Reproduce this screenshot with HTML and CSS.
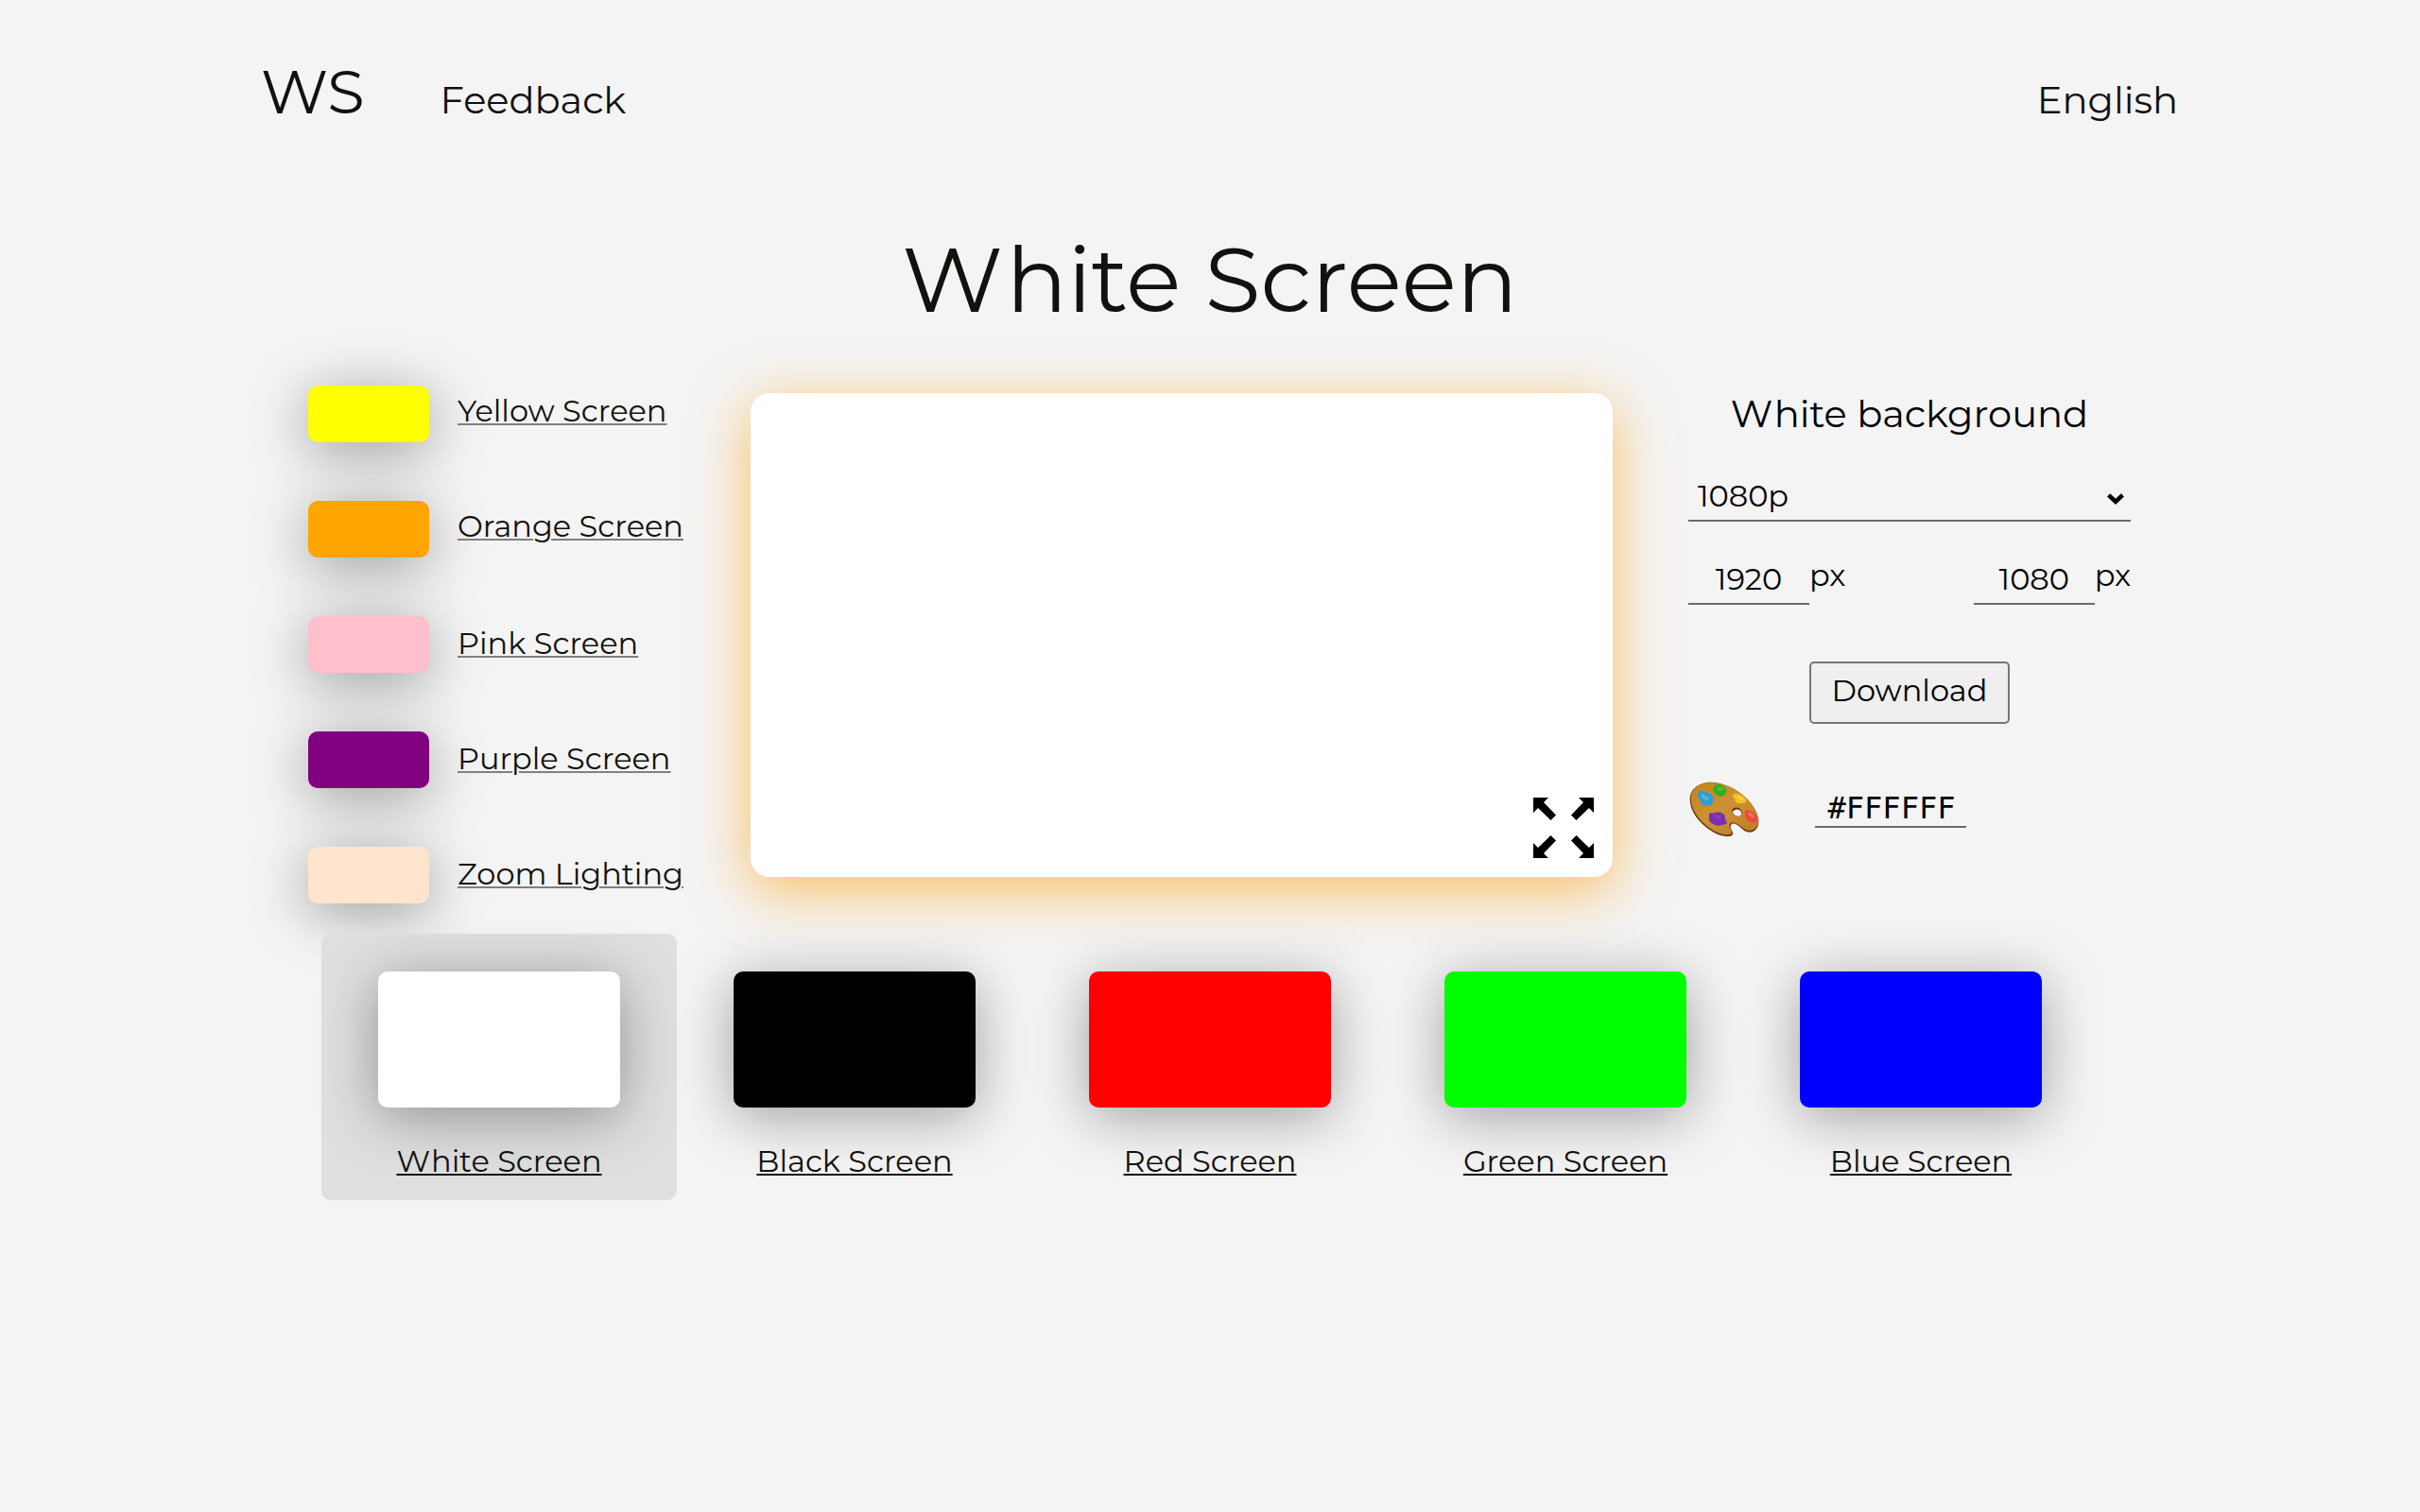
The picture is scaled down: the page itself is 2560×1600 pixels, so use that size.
FILE: index.html
```html
<!DOCTYPE html>
<html lang="en">
<head>
    <meta charset="UTF-8">
    <meta name="viewport" content="width=device-width, initial-scale=1.0">
    <title>White Screen</title>
    <link rel="stylesheet" href="styles.css">
</head>
<body>

    <header class="header">
        <a class="logo" href="#">WS</a>
        <a class="nav-link" href="#">Feedback</a>
        <a class="nav-link lang" href="#">English</a>
    </header>

    <h1 class="title">White Screen</h1>

    <div class="content">
        <ul class="side-list">
            <li><a href="#"><span class="swatch yellow"></span><span class="label">Yellow Screen</span></a></li>
            <li><a href="#"><span class="swatch orange"></span><span class="label">Orange Screen</span></a></li>
            <li><a href="#"><span class="swatch pink"></span><span class="label">Pink Screen</span></a></li>
            <li><a href="#"><span class="swatch purple"></span><span class="label">Purple Screen</span></a></li>
            <li><a href="#"><span class="swatch zoom"></span><span class="label">Zoom Lighting</span></a></li>
        </ul>

        <div class="preview" id="preview">
            <svg class="expand" viewBox="0 0 64 64" onclick="openFull()">
                <path d="M0 0H16L11 5L24 18.5L18.5 24L5 11L0 16Z"/>
                <path d="M64 0V16L59 11L45.5 24L40 18.5L53 5L48 0Z"/>
                <path d="M0 64V48L5 53L18.5 40L24 45.5L11 59L16 64Z"/>
                <path d="M64 64H48L53 59L40 45.5L45.5 40L59 53L64 48Z"/>
            </svg>
        </div>

        <div class="settings">
            <h2>White background</h2>
            <div class="select">
                <span>1080p</span>
                <svg class="chevron" viewBox="0 0 18 12"><path d="M1.6 1.8L9 8.8L16.4 1.8"/></svg>
            </div>
            <div class="sizes">
                <div class="size"><input type="text" value="1920"><span>px</span></div>
                <div class="size"><input type="text" value="1080"><span>px</span></div>
            </div>
            <button class="download">Download</button>
            <div class="picker">
                <svg class="palette" viewBox="0 0 222 180">
                    <defs>
                        <linearGradient id="wood" x1="0" y1="0" x2="1" y2="1">
                            <stop offset="0" stop-color="#c0851f"/>
                            <stop offset="0.5" stop-color="#cd9233"/>
                            <stop offset="1" stop-color="#bb7d27"/>
                        </linearGradient>
                    </defs>
                    <path fill="#6e3c12" d="M2 56C2 22 32 2 70 2C118 4 170 34 196 70C212 92 221 112 220 130C219 150 206 162 190 161C172 160 166 146 152 138C140 130 130 134 131 145C132 154 140 160 138 168C134 176 116 176 100 171C60 158 2 110 2 56Z"/>
                    <path fill="url(#wood)" d="M5 50C7 20 34 3 70 3C118 4 170 34 196 70C212 92 220 110 219 126C218 144 206 156 191 155C174 154 166 142 152 134C138 126 127 130 127 141C128 152 137 156 134 163C130 171 114 170 99 165C60 152 4 104 5 50Z"/>
                    <path fill="#5f330f" d="M136 92C138 80 156 80 164 90C170 98 168 108 160 110C148 112 134 104 136 92Z"/>
                    <path fill="#f4f4f4" d="M138 96C142 86 156 86 163 94C168 101 166 109 158 110C148 111 137 104 138 96Z"/>
                    <path fill="#2b9ed2" d="M28 36C32 26 42 28 48 34C58 32 70 36 74 46C72 54 80 60 74 68C68 78 54 78 44 74C36 72 38 62 32 56C26 50 26 42 28 36Z"/>
                    <path fill="#54b4e0" d="M36 38C44 38 48 46 56 48C64 52 64 58 58 60C48 58 38 50 36 38Z"/>
                    <path fill="#2fae22" d="M76 22C78 12 88 8 95 9C104 12 116 18 118 28C119 38 110 48 98 47C86 46 76 36 76 22Z"/>
                    <path fill="#4cc436" d="M88 20C96 14 108 20 110 28C104 26 96 32 90 28Z"/>
                    <path fill="#f2bf24" d="M139 42C144 38 150 40 156 39C166 42 180 52 181 62C178 70 162 72 152 68C142 64 148 56 142 52C138 48 137 45 139 42Z"/>
                    <path fill="#fbd848" d="M152 46C162 46 172 54 172 60C164 58 154 56 152 46Z"/>
                    <path fill="#7b2fae" d="M62 104C66 96 74 102 82 98C92 94 104 98 112 106C114 114 112 122 120 130C118 138 106 136 98 140C86 142 74 134 66 128C58 122 66 112 62 104Z"/>
                    <path fill="#8a3fbc" d="M76 106C88 102 100 108 102 118C94 122 82 116 76 106Z"/>
                    <path fill="#ee4a3c" d="M177 92C182 86 190 92 198 96C208 100 218 110 217 124C212 132 198 132 188 126C180 118 174 102 177 92Z"/>
                    <path fill="#ff7565" d="M186 98C196 98 206 106 206 114C196 114 188 108 186 98Z"/>
                </svg>
                <input class="hex" id="hex" type="text" value="#FFFFFF">
            </div>
        </div>
    </div>

    <ul class="cards">
        <li class="active"><a href="#"><span class="card white"></span><span class="label">White Screen</span></a></li>
        <li><a href="#"><span class="card black"></span><span class="label">Black Screen</span></a></li>
        <li><a href="#"><span class="card red"></span><span class="label">Red Screen</span></a></li>
        <li><a href="#"><span class="card green"></span><span class="label">Green Screen</span></a></li>
        <li><a href="#"><span class="card blue"></span><span class="label">Blue Screen</span></a></li>
    </ul>

    <script>
        const preview = document.getElementById('preview');
        const hex = document.getElementById('hex');

        function openFull() {
            preview.requestFullscreen();
        }

        hex.addEventListener('input', function () {
            preview.style.backgroundColor = hex.value;
        });
    </script>
</body>
</html>
```
FILE: styles.css
```css
* {
    box-sizing: border-box;
}
body {
    margin: 0;
    padding: 58px 256px 0 276px;
    min-height: 100vh;
    background-color: #f4f4f4;
    color: #000;
    font-family: Montserrat, Inter, sans-serif;
    font-size: 32px;
    line-height: 39px;
}
a {
    color: #11110d;
    text-decoration: none;
}
ul {
    list-style: none;
    margin: 0;
    padding: 0;
}

.header {
    display: flex;
    align-items: baseline;
}
.logo {
    font-size: 64px;
    line-height: 78px;
}
.nav-link {
    font-size: 40px;
    line-height: 49px;
    margin-left: 80px;
}
.nav-link.lang {
    margin-left: auto;
}
.title {
    margin: 101px 0 54px -20px;
    color: #11110d;
    font-size: 96px;
    font-weight: 400;
    line-height: 117px;
    text-align: center;
}
/* loosen the tight W-h pair */
.title::first-letter,
.settings h2::first-letter,
.active .label::first-letter {
    letter-spacing: 0.035em;
}

/* three columns */
.content {
    display: flex;
    align-items: flex-start;
    height: 580px;
    padding-left: 50px;
}
.side-list {
    width: 468px;
}
.side-list li {
    height: 122px;
}
.side-list a {
    display: flex;
    gap: 30px;
}
.swatch {
    width: 128px;
    height: 60px;
    border-radius: 10px;
    box-shadow: 0 10px 60px rgba(0,0,0,0.37);
}
.label {
    text-decoration: underline;
    text-decoration-thickness: 2px;
    text-underline-offset: 2px;
}
.side-list .label {
    margin-top: 7px;
    text-decoration-color: #808080;
}
.side-list li:nth-child(n+3) .label {
    margin-top: 9px;
}
.yellow { background-color: yellow; }
.orange { background-color: orange; }
.pink { background-color: pink; }
.purple { background-color: purple; }
.zoom { background-color: #ffe4ce; }

.preview {
    display: flex;
    flex-shrink: 0;
    justify-content: flex-end;
    align-items: flex-end;
    width: 912px;
    height: 512px;
    margin-top: 8px;
    padding: 20px;
    background-color: #fff;
    border-radius: 20px;
    box-shadow: 0 14px 60px rgba(255,158,10,0.63);
}
.expand {
    width: 64px;
    height: 64px;
    cursor: pointer;
}

.settings {
    display: flex;
    flex-direction: column;
    flex-shrink: 0;
    width: 468px;
    margin: 5px 0 0 80px;
}
.settings h2 {
    margin: 0 0 43px;
    font-size: 40px;
    font-weight: 400;
    line-height: 49px;
    text-align: center;
}
.select {
    display: flex;
    justify-content: space-between;
    padding: 0 7px 6px 10px;
    border-bottom: 2px solid #6b6b6b;
}
.chevron {
    width: 18px;
    height: 12px;
    margin-top: 17px;
    fill: none;
    stroke: #000;
    stroke-width: 4.6;
}
.sizes {
    display: flex;
    justify-content: space-between;
    margin-top: 37px;
}
.size {
    display: flex;
    align-items: flex-start;
}
input {
    width: 128px;
    height: 51px;
    padding: 4px 0 6px;
    border: none;
    border-bottom: 2px solid #6b6b6b;
    border-radius: 0;
    background: none;
    color: #000;
    font: inherit;
    text-align: center;
    outline: none;
}
.download {
    align-self: center;
    width: 212px;
    height: 66px;
    margin-top: 60px;
    padding: 9px 0 14px;
    border: 2px solid #767676;
    border-radius: 5px;
    background-color: #efefef;
    color: #000;
    font: inherit;
    cursor: pointer;
}
.picker {
    display: flex;
    align-items: flex-start;
    margin-top: 61px;
}
.palette {
    width: 74px;
    height: 60px;
    margin-left: 1px;
}
.hex {
    width: 160px;
    height: 40px;
    margin: 9px 0 0 59px;
    padding: 0 0 0 2px;
    font-family: "DejaVu Sans Mono", monospace;
}

/* main colors */
.cards {
    display: flex;
    padding-left: 64px;
}
.cards li {
    flex-shrink: 0;
    width: 376px;
    height: 282px;
    padding: 40px 60px 0;
    border-radius: 10px;
}
.cards li.active {
    background-color: #dfdfdf;
}
.cards a {
    display: flex;
    flex-direction: column;
    align-items: center;
    gap: 37px;
}
.card {
    width: 256px;
    height: 144px;
    border-radius: 10px;
    box-shadow: 0 10px 60px rgba(0,0,0,0.35);
}
.white { background-color: #fff; }
.black { background-color: #000; }
.red { background-color: #f00; }
.green { background-color: #0f0; }
.blue { background-color: #00f; }
```
